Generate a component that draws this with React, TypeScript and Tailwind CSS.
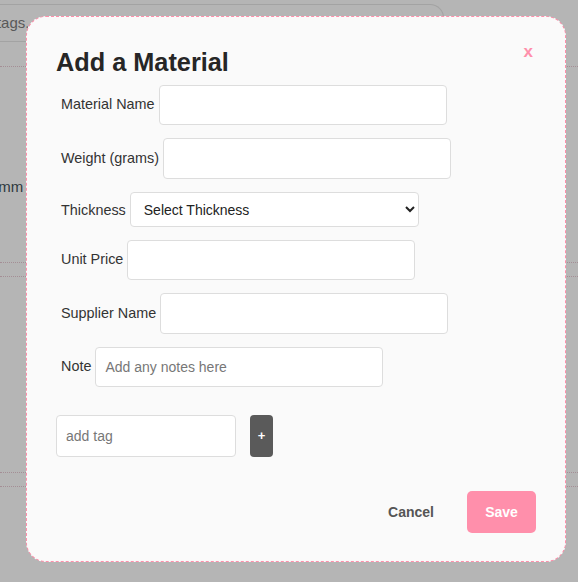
export default function App() {
    const rows = [
        { label: "Material Name", h: "h-[40px]" },
        { label: "Weight (grams)", h: "h-[41px]" },
    ];
    const rows2 = [
        { label: "Unit Price", h: "h-[40px]" },
        { label: "Supplier Name", h: "h-[41px]" },
    ];

    return (
        <div className="relative w-[578px] h-[582px] overflow-hidden bg-[#b5b5b5] font-['Liberation_Sans',Arial,sans-serif]">
            {/* page behind the overlay */}
            <div className="pt-[4px]">
                <div className="flex w-[444px] h-[38px] items-center border-y border-r border-[#a3a3a3] rounded-r-[14px] overflow-hidden">
                    <span className="ml-[-134px] whitespace-nowrap text-[15px] text-[#595959]">Search by name or tags.</span>
                </div>
                <div className="mt-[24px] border-t border-dotted border-[#a48e95]"></div>
                <div className="h-[195px] flex items-center">
                    <span className="ml-[-10px] mt-[46px] text-[15px] text-[#2f3a40]">3mm</span>
                </div>
                <div className="border-t border-dotted border-[#a48e95]"></div>
                <div className="mt-[13px] border-t border-dotted border-[#a48e95]"></div>
                <div className="h-[195px]"></div>
                <div className="border-t border-dotted border-[#a48e95]"></div>
                <div className="mt-[13px] border-t border-dotted border-[#a48e95]"></div>
            </div>

            {/* modal */}
            <div className="absolute inset-0 pl-[26px] pt-[16px]">
                <div className="w-[540px] h-[546px] bg-[#fafafa] border border-dashed border-[#ff8fab] rounded-[20px] pl-[29px] pr-[29px] pt-[31px] text-[#333]">
                    <div className="flex justify-between items-start">
                        <h2 className="text-[25.3px] leading-[28px] font-bold text-[#262626]">Add a Material</h2>
                        <button className="mt-[-6px] mr-[3px] text-[17px] font-bold leading-[20px] text-[#ff8fab]">x</button>
                    </div>

                    <div className="mt-[9px] ml-[5px] flex flex-col gap-[13px] text-[14.4px]">
                        {rows.map((r) => (
                            <div key={r.label} className="flex items-center gap-[4px]">
                                <label>{r.label}</label>
                                <input className={`w-[288px] ${r.h} bg-white border border-[#ddd] rounded-[4px] px-[10px]`} />
                            </div>
                        ))}
                        <div className="flex items-center gap-[4px]">
                            <label className="mt-[2px]">Thickness</label>
                            <select className="w-[289px] h-[35px] bg-white border border-[#ddd] rounded-[4px] pl-[9px] pr-[6px] text-[14px] text-[#222]">
                                <option>Select Thickness</option>
                            </select>
                        </div>
                        {rows2.map((r) => (
                            <div key={r.label} className="flex items-center gap-[4px]">
                                <label>{r.label}</label>
                                <input className={`w-[288px] ${r.h} bg-white border border-[#ddd] rounded-[4px] px-[10px]`} />
                            </div>
                        ))}
                        <div className="flex items-center gap-[4px]">
                            <label>Note</label>
                            <input
                                placeholder="Add any notes here"
                                className="w-[288px] h-[40px] bg-white border border-[#ddd] rounded-[4px] px-[9px] text-[14px] placeholder:text-[#777]"
                            />
                        </div>
                    </div>

                    <div className="mt-[28px] flex gap-[14px] text-[14px]">
                        <input
                            placeholder="add tag"
                            className="w-[180px] h-[42px] bg-white border border-[#ddd] rounded-[4px] px-[9px] placeholder:text-[#777]"
                        />
                        <button className="w-[23px] h-[42px] bg-[#5a5a5a] rounded-[4px] text-white font-bold text-[13px]">+</button>
                    </div>

                    <div className="mt-[34px] flex justify-end items-center text-[14px] font-bold">
                        <button className="px-[16px] h-[42px] text-[#555] mr-[17px]">Cancel</button>
                        <button className="w-[69px] h-[42px] bg-[#ff8fab] rounded-[5px] text-white">Save</button>
                    </div>
                </div>
            </div>
        </div>
    );
}
